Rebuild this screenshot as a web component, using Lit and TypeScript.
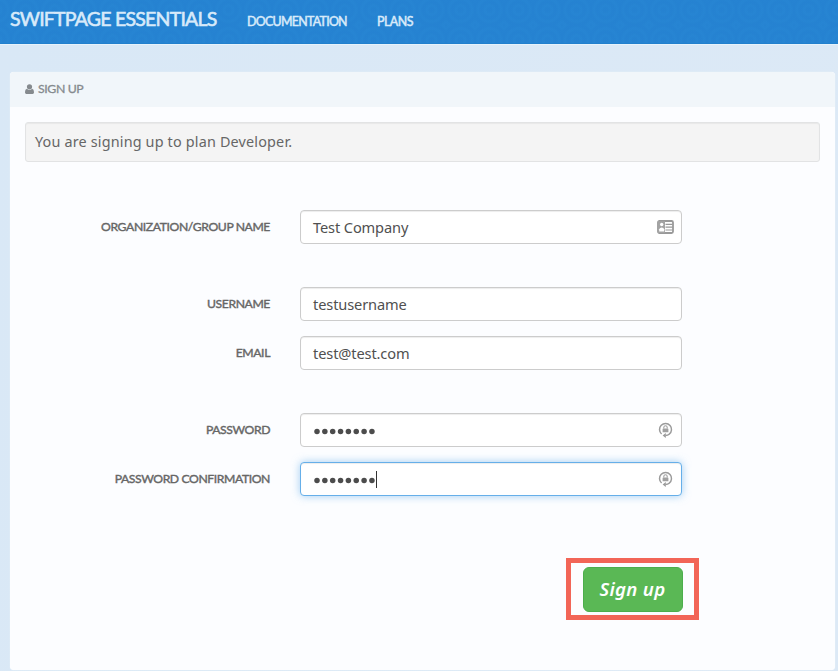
import { LitElement, html, css, svg, nothing } from "lit";
import { customElement, property } from "lit/decorators.js";

const cardIcon = svg`<svg width="17" height="14" viewBox="0 0 17 14">
  <rect x="1" y="1" width="15" height="12" rx="1.5" fill="#fff" stroke="#999" stroke-width="1.8"/>
  <rect x="1" y="1" width="7" height="12" fill="#a3a3a3"/>
  <circle cx="4.7" cy="4.5" r="1.7" fill="#fff"/>
  <path d="M2.2 11.4V9.2Q2.8 7.4 4.7 7.4T7.2 9.2V11.4Z" fill="#fff"/>
  <path d="M8.5 4.4H15.5M8.5 7.2H15.5M8.5 10H15.5" stroke="#999" stroke-width="1.2" fill="none"/>
</svg>`;

const lockIcon = svg`<svg width="15" height="17" viewBox="0 0 15 17">
  <path d="M3.6 12A6 6 0 1 1 11.2 12.2Q9.8 13.4 7.5 13.5" fill="none" stroke="#9b9b9b" stroke-width="1.5"/>
  <path d="M4.6 13.5L7.8 10.9V16.1Z" fill="#9b9b9b"/>
  <rect x="4.6" y="6.5" width="5.8" height="3.8" rx=".4" fill="#a0a0a0"/>
  <path d="M5.8 6.6V5.4A1.7 1.7 0 0 1 9.2 5.4V6.6" fill="none" stroke="#a0a0a0" stroke-width="1.1"/>
</svg>`;

@customElement("form-row")
class FormRow extends LitElement {
  @property() label = "";
  @property() value = "";
  @property() icon = "";
  @property({ type: Boolean }) secret = false;
  @property({ type: Boolean }) active = false;

  static styles = css`
    :host { display: flex; align-items: center; height: 34px; }
    .label { width: 260px; margin-right: 30px; text-align: right; box-sizing: border-box;
      font: 400 12.2px/34px Lato, sans-serif; letter-spacing: -.4px; color: #666;
      -webkit-text-stroke: .4px #666; white-space: nowrap; }
    .field { width: 382px; height: 34px; box-sizing: border-box; border: 1px solid #ccc; border-radius: 4px;
      background: #fff; box-shadow: inset 0 1px 1px rgba(0,0,0,.075); padding: 0 7px 0 12px;
      display: flex; align-items: center; font: 14.6px/32px "Noto Sans", sans-serif; letter-spacing: -.12px; color: #505050; }
    .field.active { border-color: #66afe9; box-shadow: inset 0 1px 1px rgba(0,0,0,.075), 0 0 8px rgba(102,175,233,.6); }
    .text { flex: 1; display: flex; align-items: center; }
    .dots { display: block; padding: 2px 0 0; height: 8px; line-height: 0; }
    .dots svg { display: block; }
    .caret { width: 1px; height: 17px; background: #333; }
    .icon { display: flex; width: 17px; justify-content: center; }
    .icon svg { display: block; }
  `;

  render() {
    return html`<div class="label">${this.label}</div>
      <div class="field ${this.active ? "active" : ""}">
        <div class="text">
          ${this.secret
            ? html`<span class="dots"><svg width="63" height="8" fill="#4c4c4c">${Array.from({ length: 8 }, (_, i) => svg`<circle cx=${4 + i * 7.85} cy="4.5" r="2.75"/>`)}</svg></span>`
            : html`<span>${this.value}</span>`}
          ${this.active ? html`<i class="caret"></i>` : nothing}
        </div>
        <span class="icon">${this.icon === "card" ? cardIcon : this.icon === "lock" ? lockIcon : nothing}</span>
      </div>`;
  }
}

@customElement("app-root")
class AppRoot extends LitElement {
  static styles = css`
    :host { display: block; box-sizing: border-box; width: 838px; height: 671px; overflow: hidden;
      background: linear-gradient(100deg, #d9e8f6, #dce9f6); }
    .nav { height: 44px; box-sizing: border-box; display: flex; align-items: flex-start; padding-left: 10px;
      background-color: #2684d2; border-bottom: 1px solid #2280cd; box-shadow: 0 1px 0 #e6f2fb;
      background-image:
        repeating-radial-gradient(circle at 50% 50%, rgba(10,90,180,.035) 0 2px, rgba(80,170,240,.02) 4px 5px, rgba(10,90,180,.035) 7px);
      background-size: 29px 30px; background-position: 11px -5px;
      font-family: Lato, sans-serif; font-weight: 400; color: #d8eafa; white-space: nowrap; }
    .brand { font-size: 19.5px; line-height: 38px; width: 237px; letter-spacing: -.78px; -webkit-text-stroke: .6px #d8eafa; }
    .link { font-size: 12.4px; line-height: 44px; letter-spacing: -.7px; -webkit-text-stroke: .5px #d8eafa; }
    .docs { width: 130px; }
    .plans { letter-spacing: -.5px; }
    .panel { margin: 28px 3px 0 10px; height: 598px; box-sizing: border-box; background: #fcfdff;
      border-radius: 4px; box-shadow: 0 0 1px #fff; overflow: hidden; }
    .head { height: 35px; box-sizing: border-box; padding: 0 0 1px 15px; display: flex; align-items: center; gap: 4px;
      background: #f1f6fa; font: 400 12.3px/32px Lato, sans-serif; letter-spacing: -.4px; color: #858a8e;
      -webkit-text-stroke: .3px #858a8e; }
    .notice { margin: 15px 15px 48px; height: 40px; box-sizing: border-box; border: 1px solid #e2e3e4; border-radius: 3px;
      background: #f4f4f4; box-shadow: inset 0 1px 1px rgba(0,0,0,.05); padding-left: 9px;
      font: 14.4px/37px "Noto Sans", sans-serif; letter-spacing: .17px; color: #666; }
    .gap-s { margin-top: 15px; }
    .gap-l { margin-top: 43px; }
    .actions { margin: 62px 136px 0 0; display: flex; justify-content: flex-end; }
    .mark { width: 133px; height: 62px; box-sizing: border-box; border: 5px solid #f26557; display: flex;
      align-items: center; justify-content: center; background: #fcfdff; }
    .btn { width: 100px; height: 45px; box-sizing: border-box; border: 1px solid #4cae4c; border-radius: 6px; padding: 0;
      background: #5ab855; color: #fff; font: italic 600 18.6px/42px "Noto Sans", sans-serif; letter-spacing: .3px; }
  `;

  render() {
    return html`
      <nav class="nav">
        <span class="brand">SWIFTPAGE ESSENTIALS</span>
        <span class="link docs">DOCUMENTATION</span>
        <span class="link plans">PLANS</span>
      </nav>
      <main class="panel">
        <div class="head">
          <svg width="9" height="10" viewBox="0 0 9 10" fill="#858a8e"><circle cx="4.5" cy="2.8" r="2.6"/><path d="M1.9 4.7Q4.5 7.2 7.1 4.7Q9 5.3 9 8V8.6Q9 10 7.6 10H1.4Q0 10 0 8.6V8Q0 5.3 1.9 4.7Z"/></svg>
          <span>SIGN UP</span>
        </div>
        <div class="notice">You are signing up to plan Developer.</div>
        <form-row label="ORGANIZATION/GROUP NAME" value="Test Company" icon="card"></form-row>
        <form-row class="gap-l" label="USERNAME" value="testusername"></form-row>
        <form-row class="gap-s" label="EMAIL" value="test@test.com"></form-row>
        <form-row class="gap-l" label="PASSWORD" icon="lock" secret></form-row>
        <form-row class="gap-s" label="PASSWORD CONFIRMATION" icon="lock" secret active></form-row>
        <div class="actions"><div class="mark"><button class="btn">Sign up</button></div></div>
      </main>`;
  }
}
